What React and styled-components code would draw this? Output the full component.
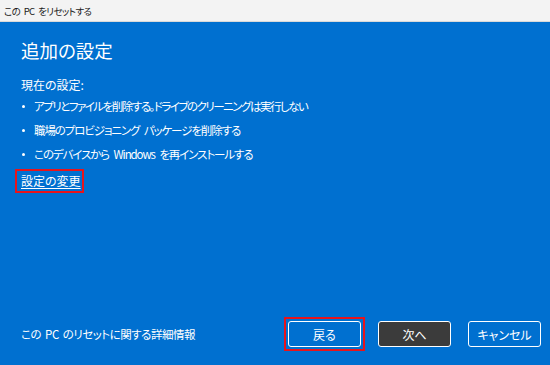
import React from 'react'
import styled, { createGlobalStyle } from 'styled-components'

const GlobalStyle = createGlobalStyle`
  html, body {
    margin: 0;
    padding: 0;
    background: #0070d0;
  }
  body {
    font-family: "Noto Sans CJK JP", "Noto Sans", sans-serif;
    font-feature-settings: "palt";
  }
`;

const Window = styled.div`
  width: 550px;
  height: 365px;
  display: flex;
  flex-direction: column;
  overflow: hidden;
`;

const TitleBar = styled.div`
  height: 21px;
  flex: none;
  display: flex;
  align-items: center;
  padding-left: 4px;
  background: #f3f3f3;
  border-bottom: 1px solid #d9d9d9;
  color: #1a1a1a;
  font-size: 9.5px;
  letter-spacing: -0.6px;
  word-spacing: 2px;
`;

const Body = styled.div`
  flex: 1;
  display: flex;
  flex-direction: column;
  padding: 15px 9px 18px 21px;
  background: #0070d0;
  color: #ffffff;
`;

const Heading = styled.h1`
  margin: 0;
  font-size: 18.5px;
  font-weight: 400;
  line-height: 26px;
`;

const Label = styled.div`
  margin-top: 13px;
  font-size: 12px;
  line-height: 18px;
`;

const List = styled.ul`
  margin: 3px 0 0;
  padding: 0;
  list-style: none;
  display: flex;
  flex-direction: column;
  gap: 6px;
`;

const Item = styled.li`
  display: flex;
  align-items: center;
  font-size: 11.5px;
  letter-spacing: ${(p) => (p.$tight ? '-1.5px' : '-1.1px')};
  word-spacing: 3px;
  line-height: 18px;
  white-space: pre;
  &::before {
    content: "";
    width: 3px;
    height: 3px;
    border-radius: 50%;
    background: #ffffff;
    margin: 0 9px 0 1px;
    flex: none;
  }
`;

const LinkRow = styled.div`
  margin-top: 4px;
`;

const Link = styled.a`
  display: inline-block;
  margin-left: -6px;
  padding: 1px 1px 1px 4px;
  border: 2px solid #e8141b;
  color: #ffffff;
  font-size: 12px;
  line-height: 18px;
  text-decoration: underline;
  text-underline-offset: 2px;
  cursor: pointer;
`;

const Footer = styled.div`
  margin-top: auto;
  display: flex;
  align-items: center;
`;

const FooterLink = styled.a`
  flex: 1;
  font-size: 11.5px;
  letter-spacing: -0.5px;
  word-spacing: 2px;
  line-height: 18px;
  color: #ffffff;
  cursor: pointer;
`;

const Buttons = styled.div`
  display: flex;
  align-items: center;
  gap: 17px;
`;

const Marked = styled.span`
  display: inline-flex;
  margin: -4px;
  padding: 2px;
  border: 2px solid #e8141b;
`;

const Button = styled.button`
  width: 73px;
  height: 26px;
  border: 1px solid #ffffff;
  border-radius: 3px;
  background: ${(p) => (p.$primary ? '#3b3b3b' : '#0070d0')};
  color: #ffffff;
  font-family: inherit;
  font-feature-settings: "palt";
  font-size: 12px;
  padding: 0;
  cursor: pointer;
`;

export default function App() {
  return (
    <>
      <GlobalStyle />
      <Window>
        <TitleBar>この PC をリセットする</TitleBar>
        <Body>
          <Heading>追加の設定</Heading>
          <Label>現在の設定:</Label>
          <List>
            <Item $tight>アプリとファイルを削除する。ドライブのクリーニングは実行しない</Item>
            <Item>職場のプロビジョニング パッケージを削除する</Item>
            <Item>このデバイスから Windows を再インストールする</Item>
          </List>
          <LinkRow>
            <Link>設定の変更</Link>
          </LinkRow>
          <Footer>
            <FooterLink>この PC のリセットに関する詳細情報</FooterLink>
            <Buttons>
              <Marked>
                <Button>戻る</Button>
              </Marked>
              <Button $primary>次へ</Button>
              <Button>キャンセル</Button>
            </Buttons>
          </Footer>
        </Body>
      </Window>
    </>
  );
}
